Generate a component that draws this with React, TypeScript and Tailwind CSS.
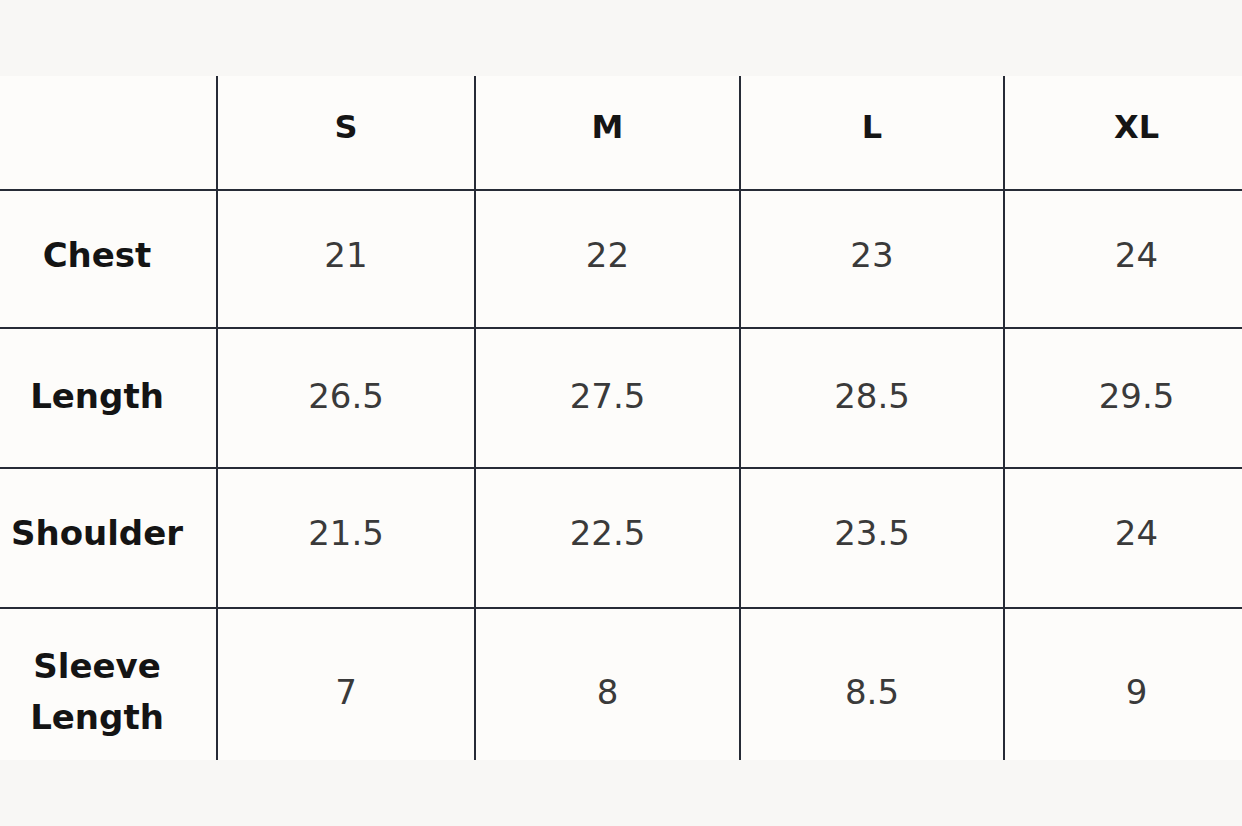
const SIZES = ["S", "M", "L", "XL"];

type Row = {
  label: string[];
  values: string[];
  rowClass: string;
};

const ROWS: Row[] = [
  { label: ["Chest"], values: ["21", "22", "23", "24"], rowClass: "h-[136px] pb-[7px]" },
  { label: ["Length"], values: ["26.5", "27.5", "28.5", "29.5"], rowClass: "h-[138px] pb-[3px]" },
  { label: ["Shoulder"], values: ["21.5", "22.5", "23.5", "24"], rowClass: "h-[138px] pb-[10px]" },
  { label: ["Sleeve", "Length"], values: ["7", "8", "8.5", "9"], rowClass: "h-[156px] pt-[10px]" },
];

const COLS = "grid grid-cols-[218px_258px_265px_264px_1fr]";
const LINE = "border-[#272b36]";

export default function App() {
  return (
    <div
      className="flex h-[826px] w-full flex-col bg-[#f8f7f5] pt-[76px]"
      style={{ fontFamily: '"DejaVu Sans", "Noto Sans", sans-serif' }}
    >
      <div className="h-[684px] overflow-hidden bg-[#fdfcfa]">
        {/* header */}
        <div className={`${COLS} h-[115px] border-b-2 ${LINE}`}>
          <div className={`border-r-2 ${LINE}`} />
          {SIZES.map((size, i) => (
            <div
              key={size}
              className={`flex items-center justify-center pb-[12px] text-[32px] font-bold text-[#151515] ${
                i < 3 ? `border-r-2 ${LINE}` : "pl-[26px]"
              }`}
            >
              {size}
            </div>
          ))}
        </div>

        {ROWS.map((row, r) => (
          <div
            key={row.label.join(" ")}
            className={`${COLS} ${r < ROWS.length - 1 ? `border-b-2 ${LINE}` : ""}`}
          >
            <div
              className={`flex flex-col items-center justify-center border-r-2 pr-[22px] text-[34px] leading-[51px] font-bold text-[#141414] ${LINE} ${row.rowClass}`}
            >
              {row.label.map((part) => (
                <span key={part}>{part}</span>
              ))}
            </div>
            {row.values.map((value, i) => (
              <div
                key={i}
                className={`flex items-center justify-center text-[34px] text-[#3a3a3a] ${row.rowClass} ${
                  i < 3 ? `border-r-2 ${LINE}` : "pl-[26px]"
                }`}
              >
                {value}
              </div>
            ))}
          </div>
        ))}
      </div>
    </div>
  );
}
